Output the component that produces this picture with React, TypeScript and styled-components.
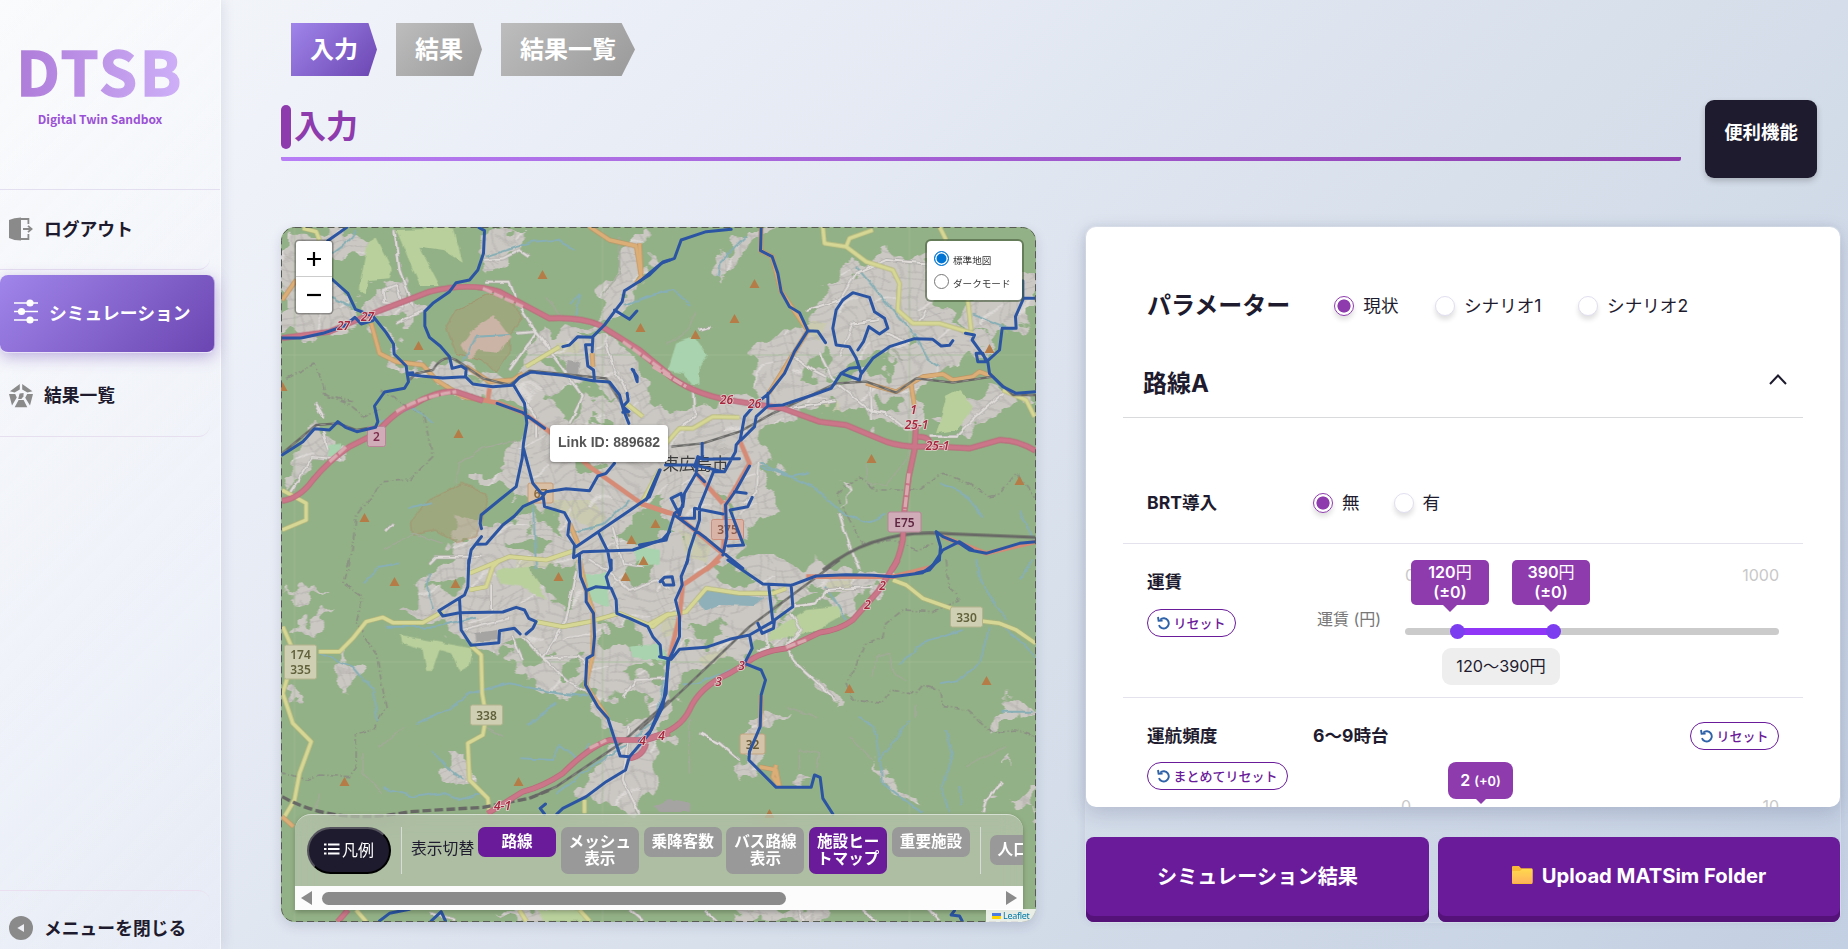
import React from "react";
import styled, { createGlobalStyle, css } from "styled-components";

const Global = createGlobalStyle`
  * { box-sizing: border-box; }
  html, body { margin: 0; height: 100%; overflow: hidden; }
  body {
    font-family: Inter, "Noto Sans CJK JP", sans-serif;
    color: #1e1b2e;
    background: linear-gradient(135deg, #f5f7fa 0%, #e9edf6 27%, #d4dde9 66%, #c3cfe2 100%);
    height: 949px;
  }
  button { font-family: inherit; }
`;

const Page = styled.div`
  display: flex;
  width: 1848px;
  height: 949px;
  overflow: hidden;
`;

/* ---------- sidebar ---------- */
const Sidebar = styled.aside`
  width: 221px;
  height: 949px;
  flex: none;
  display: flex;
  flex-direction: column;
  font-family: "Noto Sans CJK JP", sans-serif;
  background: linear-gradient(135deg, rgba(255, 255, 255, 0.5), rgba(240, 243, 252, 0.35));
  border-right: 1px solid rgba(255, 255, 255, 0.6);
  box-shadow: 2px 0 12px rgba(31, 38, 90, 0.1);
`;
const Brand = styled.div`
  height: 190px;
  display: flex;
  flex-direction: column;
  align-items: center;
  padding: 29px 20px 0 0;
  border-bottom: 1px solid #e3def0;
`;
const BrandName = styled.div`
  font-size: 61px;
  line-height: 81px;
  font-weight: 700;
  letter-spacing: 2.5px;
  -webkit-text-stroke: 1.4px transparent;
  background: linear-gradient(90deg, #ae7bd9, #ceb0f8);
  -webkit-background-clip: text;
  background-clip: text;
  color: transparent;
`;
const BrandSub = styled.div`
  font-size: 12px;
  line-height: 18px;
  font-weight: 700;
  color: #9b51d6;
`;
const NavItem = styled.a<{ $active?: boolean; $bottom?: boolean; $lift?: number }>`
  display: flex;
  align-items: center;
  gap: 11px;
  width: 210px;
  height: 80px;
  padding: 0 0 2px 9px;
  font-size: 17.8px;
  font-weight: 700;
  white-space: nowrap;
  color: #1e1b2e;
  border-bottom: 1px solid #e6dff0;
  border-radius: 0 0 12px 0;
  svg { flex: none; }
  span { padding-bottom: ${(p) => p.$lift || 0}px; }
  ${(p) =>
    p.$active &&
    css`
      width: 215px;
      height: 78px;
      margin: 5px 0 4px;
      padding: 0 0 4px 14px;
      border: 0;
      border-bottom: 1px solid #e8e2f6;
      border-right: 1px solid #b9a3e0;
      border-radius: 8px;
      color: #fff;
      background: linear-gradient(135deg, #a085ea, #6b46b2);
      box-shadow: 0 4px 15px rgba(107, 70, 178, 0.4);
    `}
  ${(p) =>
    p.$bottom &&
    css`
      margin-top: auto;
      height: 59px;
      padding: 15px 0 0 9px;
      border-bottom: 0;
      border-top: 1px solid #eadff0;
      border-radius: 0 12px 0 0;
    `}
`;

/* ---------- main ---------- */
const Main = styled.main`
  flex: 1;
  min-width: 0;
  padding: 23px 8px 0 60px;
`;
const Steps = styled.nav`
  display: flex;
  gap: 19px;
  padding-left: 10px;
`;
const Step = styled.div<{ $active?: boolean }>`
  height: 53px;
  padding: 0 19px;
  font: 700 24px/50px "Noto Sans CJK JP", sans-serif;
  color: #fff;
  clip-path: polygon(0 0, 90% 0, 100% 50%, 90% 100%, 0 100%);
  background: ${(p) =>
    p.$active ? "linear-gradient(135deg, #a085ea, #6b46b2)" : "linear-gradient(135deg, #bdbdbd, #9a9a9a)"};
`;
const Heading = styled.header`
  display: flex;
  gap: 24px;
  margin-top: 24px;
`;
const TitleBlock = styled.div`
  width: 1400px;
  height: 61px;
  padding-top: 5px;
  border-radius: 2px;
  background: linear-gradient(90deg, #b77ef5, #8e3bad) left bottom / 100% 4px no-repeat;
`;
const Title = styled.h1`
  margin: 0;
  display: flex;
  align-items: center;
  gap: 3px;
  height: 44px;
  font: 700 32px/44px "Noto Sans CJK JP", sans-serif;
  color: #8e3bad;
  span { padding-bottom: 6px; }
  &::before {
    content: "";
    width: 10px;
    height: 44px;
    border-radius: 5px;
    background: #8e3bad;
  }
`;
const ToolsButton = styled.button`
  width: 112px;
  height: 78px;
  border: 0;
  border-radius: 9px;
  padding: 0 0 16px;
  font: 700 18.4px/28px "Noto Sans CJK JP", sans-serif;
  color: #fff;
  background: #1e1b2e;
  box-shadow: 0 3px 6px rgba(0, 0, 0, 0.2);
`;
const Columns = styled.div`
  display: flex;
  gap: 50px;
  margin-top: 49px;
`;

/* ---------- map ---------- */
const MapCard = styled.section`
  position: relative;
  width: 755px;
  height: 695px;
  border-radius: 14px;
  overflow: hidden;
  box-shadow: 0 4px 12px rgba(31, 38, 90, 0.15);
  > svg { display: block; }
`;
const ZoomBox = styled.div`
  position: absolute;
  left: 15px;
  top: 14px;
  width: 36px;
  border-radius: 3px;
  background: #fff;
  box-shadow: 0 0 0 1.5px rgba(0, 0, 0, 0.3);
`;
const ZoomButton = styled.div`
  height: 36px;
  display: grid;
  place-items: center;
  &:first-child { border-bottom: 1px solid #ccc; }
`;
const LayerBox = styled.div`
  position: absolute;
  right: 14px;
  top: 14px;
  width: 95px;
  height: 59px;
  padding: 9px 7px;
  border-radius: 4px;
  background: #fff;
  box-shadow: 0 0 0 2px rgba(70, 90, 60, 0.6);
`;
const LayerOption = styled.label`
  display: flex;
  gap: 4px;
  height: 23px;
  align-items: flex-start;
  font: 9.6px/20px "Noto Sans CJK JP", sans-serif;
  color: #333;
`;
const NativeDot = styled.i<{ $on?: boolean }>`
  width: 15px;
  height: 15px;
  margin-top: 1px;
  border-radius: 50%;
  border: ${(p) => (p.$on ? "1.5px solid #0075d4" : "1px solid #767676")};
  background: ${(p) => (p.$on ? "#0075d4" : "#fff")};
  box-shadow: ${(p) => (p.$on ? "inset 0 0 0 1.5px #fff" : "none")};
`;
const LinkTip = styled.div`
  position: absolute;
  left: 269px;
  top: 198px;
  width: 118px;
  height: 37px;
  border-radius: 4px;
  background: #fff;
  text-align: center;
  font: 700 14px/35px "Liberation Sans", sans-serif;
  color: #555;
  box-shadow: 0 1px 3px rgba(0, 0, 0, 0.4);
`;
const MapTools = styled.div`
  position: absolute;
  left: 14px;
  top: 587px;
  width: 728px;
  height: 96px;
  border-radius: 16px 16px 0 0;
  border-top: 1px solid rgba(255, 255, 255, 0.5);
  background: rgba(212, 210, 204, 0.4);
  backdrop-filter: blur(10px);
  overflow: hidden;
  box-shadow: 0 2px 5px rgba(0, 0, 0, 0.25);
`;
const ToolRow = styled.div`
  display: flex;
  align-items: flex-start;
  height: 71px;
  padding: 12px 0 0 12px;
  font-family: "Noto Sans CJK JP", sans-serif;
`;
const LegendButton = styled.button`
  flex: none;
  width: 84px;
  height: 47px;
  padding: 0 0 3px;
  display: flex;
  align-items: center;
  justify-content: center;
  gap: 2px;
  border: 2px outset #1e1b2e;
  border-color: #55535e #000 #000 #55535e;
  border-radius: 24px;
  background: #1e1b2e;
  color: #fff;
  font-size: 16px;
  line-height: 20px;
`;
const Rule = styled.div<{ $gap: number }>`
  flex: none;
  width: 1px;
  height: 47px;
  margin: 0 9px 0 ${(p) => p.$gap}px;
  background: rgba(225, 225, 232, 0.8);
`;
const ToolLabel = styled.span`
  flex: none;
  width: 67px;
  font-size: 15.8px;
  line-height: 42px;
`;
const Toggle = styled.button<{ $on?: boolean; $low?: boolean }>`
  flex: none;
  width: 78px;
  margin: ${(p) => (p.$low ? "8px" : "0")} 4.8px 0 0;
  padding: 5px 5px 8px;
  border: 0;
  border-radius: 7px;
  font-size: 15.6px;
  line-height: 17px;
  font-weight: 700;
  white-space: pre;
  color: #fff;
  background: ${(p) => (p.$on ? "#6a1b9a" : "#999")};
`;
const ScrollTrack = styled.div`
  display: flex;
  align-items: center;
  height: 24px;
  padding: 0 6px;
  background: #fcfcfc;
`;
const Thumb = styled.div`
  width: 464px;
  height: 13px;
  margin: 0 auto 0 10px;
  border-radius: 7px;
  background: #8b8b8b;
`;
const Credit = styled.div`
  position: absolute;
  right: 0;
  bottom: 0;
  width: 50px;
  height: 13px;
  display: flex;
  align-items: center;
  gap: 2px;
  padding-left: 6px;
  background: rgba(255, 255, 255, 0.8);
  font: 9px/12px "Noto Sans", sans-serif;
  letter-spacing: -0.3px;
  color: #0078a8;
`;

/* ---------- parameter panel ---------- */
const Side = styled.section`
  width: 754px;
  height: 695px;
  border-radius: 10px;
  box-shadow: 0 0 0 1px rgba(255, 255, 255, 0.25), -2px 0 8px rgba(31, 38, 90, 0.08);
`;
const Panel = styled.div`
  height: 580px;
  padding: 0 37px;
  border-radius: 10px;
  background: #fff;
  overflow: hidden;
  box-shadow: 0 6px 20px rgba(31, 38, 90, 0.18);
`;
const ScenarioRow = styled.div`
  display: flex;
  align-items: center;
  height: 40px;
  margin-top: 59px;
  padding-left: 24px;
`;
const PanelTitle = styled.h2`
  margin: 0 44px 0 0;
  font-size: 24px;
  line-height: 38px;
  font-weight: 700;
`;
const Choice = styled.label<{ $gap?: number }>`
  display: flex;
  align-items: center;
  gap: 9px;
  margin-right: ${(p) => p.$gap || 36.5}px;
  font-size: 17.6px;
  line-height: 26px;
`;
const Dot = styled.i<{ $on?: boolean }>`
  width: 20px;
  height: 20px;
  border-radius: 50%;
  border: 1px solid ${(p) => (p.$on ? "#8e3bad" : "#e2def0")};
  background: ${(p) => (p.$on ? "radial-gradient(circle, #8e3bad 6.2px, #fff 6.9px)" : "#fff")};
  box-shadow: 0 4px 5px rgba(0, 0, 0, 0.12);
`;
const SectionHead = styled.div`
  display: flex;
  align-items: center;
  justify-content: space-between;
  height: 70px;
  margin-top: 22px;
  padding: 0 16px 3px 20px;
  border-bottom: 1px solid #d9dadc;
  font-size: 24px;
  font-weight: 700;
  svg { margin-bottom: 4px; }
`;
const Row = styled.div<{ $h: number; $top?: number; $pad?: number }>`
  display: flex;
  height: ${(p) => p.$h}px;
  margin-top: ${(p) => p.$top || 0}px;
  padding: ${(p) => p.$pad || 0}px 24px 0;
  border-bottom: 1px solid #e4e2ec;
`;
const Name = styled.div`
  width: 166px;
  flex: none;
  display: flex;
  flex-direction: column;
  align-items: flex-start;
  font-size: 17.6px;
  line-height: 28px;
  font-weight: 700;
`;
const Choices = styled.div`
  display: flex;
  height: 28px;
`;
const ResetButton = styled.button<{ $wide?: boolean; $mt?: number }>`
  width: ${(p) => (p.$wide ? 141 : 89)}px;
  height: 28px;
  margin-top: ${(p) => p.$mt || 0}px;
  display: flex;
  align-items: center;
  justify-content: center;
  gap: 3px;
  padding: 0 0 1px;
  border: 1px solid #6a1b9a;
  border-radius: 14px;
  background: #fff;
  color: #6a1b9a;
  font: 500 13px/18px "Noto Sans CJK JP", sans-serif;
  white-space: nowrap;
`;
const SliderLabel = styled.div`
  width: 92px;
  padding-top: 40px;
  text-indent: 4px;
  font-size: 16px;
  line-height: 22px;
  color: #777;
`;
const Slider = styled.div`
  position: relative;
  width: 374px;
`;
const Limits = styled.div<{ $mt: number; $indent?: number }>`
  display: flex;
  justify-content: space-between;
  margin-top: ${(p) => p.$mt}px;
  padding-left: ${(p) => p.$indent || 0}px;
  font-size: 16px;
  line-height: 20px;
  color: #c8c8c8;
`;
const Track = styled.div`
  display: flex;
  align-items: center;
  height: 7px;
  margin-top: 43px;
  border-radius: 4px;
  padding-left: 45px;
  background: #cbcbcb;
`;
const Selected = styled.div`
  display: flex;
  align-items: center;
  justify-content: space-between;
  width: 111px;
  height: 7px;
  background: linear-gradient(90deg, transparent 7px, #9036f6 7px, #9036f6 104px, transparent 104px);
`;
const Handle = styled.i`
  width: 15px;
  height: 15px;
  border-radius: 50%;
  background: #7c3df0;
`;
const Bubble = styled.div<{ $x: number; $small?: boolean }>`
  position: absolute;
  left: ${(p) => p.$x}px;
  top: ${(p) => (p.$small ? 40 : -8)}px;
  width: ${(p) => (p.$small ? 65 : 78)}px;
  height: ${(p) => (p.$small ? 37 : 45)}px;
  padding-top: ${(p) => (p.$small ? 8 : 2)}px;
  border-radius: ${(p) => (p.$small ? 8 : 5)}px;
  text-align: center;
  font-size: 16px;
  line-height: 20px;
  font-weight: 600;
  color: #fff;
  background: #8e3bad;
  small { font-size: 12.8px; }
  em { font-style: normal; font-weight: 400; }
  &::after {
    content: "";
    position: absolute;
    left: 50%;
    top: 100%;
    border: solid transparent;
    border-width: ${(p) => (p.$small ? "5px" : "7px")};
    border-top-color: #8e3bad;
    border-bottom: 0;
    transform: translateX(-50%);
  }
`;
const RangeValue = styled.div`
  width: 118px;
  height: 37px;
  margin: 13px 0 0 37px;
  border-radius: 9px;
  text-align: center;
  font-size: 16.2px;
  line-height: 36px;
  background: #eee;
`;
const FreqBody = styled.div`
  position: relative;
  flex: 1;
`;
const FreqHead = styled.div`
  display: flex;
  align-items: flex-start;
  justify-content: space-between;
  font-size: 17.6px;
  line-height: 28px;
  font-weight: 700;
`;
const Actions = styled.div`
  display: flex;
  gap: 9px;
  margin-top: 30px;
`;
const Action = styled.button<{ $w: number }>`
  width: ${(p) => p.$w}px;
  height: 85px;
  display: flex;
  align-items: center;
  justify-content: center;
  gap: 9px;
  padding: 0 0 9px;
  border: 0;
  border-radius: 8px;
  background: #6a1b9a;
  box-shadow: inset 0 -6px 0 #551279;
  color: #fff;
  font-size: 20.2px;
  font-weight: 700;
`;

/* ---------- icons ---------- */
const ResetIcon = () => (
  <svg width="13" height="14" viewBox="0 0 13 14" fill="none" stroke="#2f62a8" strokeWidth="1.9">
    <path d="M3.2 3.6A5.1 5.1 0 1 1 1.9 9.2" />
    <path d="M1 1L1.6 4.7L5.6 4.6" />
  </svg>
);
const Logout = () => (
  <svg width="24" height="24" viewBox="0 0 24 24" fill="#8a8a8a">
    <path d="M0 3 Q5 .5 12 .5V23.5Q5 23.5 0 21Z" />
    <path d="M12 2H19.4V7M12 22H19.4V17M14 12H22.5M19 8.8L22.6 12L19 15.2" fill="none" stroke="#8a8a8a" strokeWidth="1.8" />
  </svg>
);
const Sliders = () => (
  <svg width="24" height="26" viewBox="0 0 24 26" fill="#fff">
    <path d="M0 4H24M0 12.5H24M0 21H24" stroke="#fff" strokeWidth="1.7" />
    <circle cx="16" cy="4" r="3.6" />
    <circle cx="7.5" cy="12.5" r="3.6" />
    <circle cx="16" cy="21" r="3.6" />
  </svg>
);
const Pentagon = () => (
  <svg width="24" height="24" viewBox="0 0 24 24" fill="#8a8a8a">
    <path d="M10.8 0V5.6L5.6 8.6L1 7.2ZM13.2 0V5.6L18.4 8.6L23.4 7.2ZM0 10H6.2L7.8 13.4L3 21.5ZM24 10H18.2L16.2 13.8L21 21.5ZM9.6 16H14.6L18.3 23.2H5.7Z" />
    <path d="M10.6 9.6L14.6 9L14.4 12.4L12.4 15H9.2Z" />
  </svg>
);
const Collapse = () => (
  <svg width="24" height="24" viewBox="0 0 24 24">
    <circle cx="12" cy="12" r="12" fill="#8a8a8a" />
    <path d="M15 8V16L8.3 12Z" fill="#eef0f6" />
  </svg>
);
const Folder = () => (
  <svg width="21" height="18" viewBox="0 0 21 18">
    <defs>
      <linearGradient id="fold" x1="0" y1="0" x2="0" y2="1">
        <stop offset="0" stopColor="#ffd84d" />
        <stop offset="1" stopColor="#ffb35c" />
      </linearGradient>
    </defs>
    <path d="M0 1Q0 0 1 0H7L9 2.3H19.5Q20.5 2.3 20.5 3.5V17Q20.5 18 19.5 18H1Q0 18 0 17Z" fill="#f9b938" />
    <path d="M0 6Q0 5 1 5H8L10 3H19.5Q20.5 3 20.5 4V16Q20.5 17 19.5 17H1Q0 17 0 16Z" fill="url(#fold)" />
  </svg>
);

/* ---------- map drawing ---------- */
type Tile = { x: number; y: number; d: string };
const NW = { x: 270, y: 210 };
const NE = { x: 640, y: 210 };
const SW = { x: 270, y: 560 };
const SE = { x: 640, y: 560 };

const builtUp: Tile[] = [
  { ...NW, d: "M30 50L110 50L230 60L330 90L290 130L200 150L190 200L260 290L300 340L150 360L90 390L30 390Z" },
  { ...NW, d: "M300 250L400 200L440 290L380 340L300 320Z M330 350L420 470L560 450L700 500L740 480L800 350L900 400L960 380L1030 390L1120 430L1110 520L1200 640L1200 800L1130 1080L960 1080L890 960L790 880L700 760L780 640L700 570L600 560L520 520L400 500Z" },
  { ...NW, d: "M820 740L1200 700L1200 960L1000 960L900 920L800 850L640 830L600 790L700 780Z M560 930L700 900L880 960L1000 1080L520 1080Z" },
  { ...NW, d: "M130 660L180 680L220 730L130 770L60 840L40 800Z M640 60L760 60L730 140L650 200L640 120Z M1070 60L1130 60L1130 200L1040 310L900 420L840 400L980 330Z" },
  { ...NE, d: "M0 620L300 560L500 470L620 340L760 150L860 140L930 330L1060 420L880 480L830 560L850 660L700 640L600 580L420 620L360 700L420 850L400 920L320 960L310 1080L0 1080Z" },
  { ...NE, d: "M300 60L410 60L320 110L240 210L220 170Z M420 400L530 330L560 400L480 520L380 560L310 430Z M640 160L760 140L840 300L900 330L1000 380L900 440L700 420L580 480L500 330Z M1060 200L1188 170L1188 340L1080 350L1050 420L960 330Z M590 800L620 820L610 900Z M1040 540L1188 560L1100 590L980 660L900 640Z" },
  { ...SW, d: "M440 60L600 0L760 0L800 60L870 110L900 0L1200 0L1200 540L1100 760L990 730L900 690L940 620L1040 560L960 410L800 380L700 270L580 250L520 190L420 160Z" },
  { ...SW, d: "M530 580L600 570L610 650L560 690L520 650Z M40 120L120 100L170 80L110 130Z M40 380L100 410L60 450Z M60 200L230 150L130 220Z M190 280L260 300L240 400L220 400Z M700 1045L900 1045L880 1085L730 1085Z" },
  { ...SE, d: "M0 0L330 0L700 30L760 60L640 160L600 180L540 100L460 130L400 260L300 280L150 330L80 440L0 640Z M330 470L450 455L370 500L340 660L310 650L280 600L330 590Z M470 640L520 640L500 690Z M1030 480L1080 430L1188 440L1130 480L1040 500Z M700 590L820 720L850 762L740 680Z M520 350L600 420L590 435L540 390Z M1110 590L1140 620L1110 620Z M250 1045L560 1045L520 1085L300 1085Z M1090 700L1180 680L1188 760L1110 740Z" },
];
/* Wooded pockets left standing inside the built-up area */
const woods: Tile[] = [
  { ...NW, d: "M560 490L640 500L680 515L620 515ZM810 440L860 420L900 450L880 480L800 470ZM840 560L960 530L1010 550L940 580L900 640L850 620ZM1000 600L1060 640L1040 650L980 640ZM930 770L980 740L1010 770L970 790ZM650 920L740 860L800 890L700 940ZM1100 900L1200 890L1200 980L1060 990L1090 940ZM700 990L800 960L840 1000L770 1020Z" },
  { ...NE, d: "M0 900L60 880L90 920L60 980L0 990ZM560 480L700 430L790 450L720 500L620 510ZM700 560L800 560L810 600L730 600ZM780 370L850 360L830 400L780 400ZM540 420L580 430L560 480L480 510ZM250 850L280 880L260 960Z" },
  { ...SW, d: "M820 20L920 0L920 100L870 140L820 90ZM700 260L760 230L830 290L760 300ZM1060 20L1130 10L1150 60L1090 80ZM990 180L1110 200L1130 250L1020 260L990 230ZM880 290L940 310L930 360L880 340ZM1060 320L1170 300L1160 340L1080 350ZM1000 420L1150 400L1130 460L1060 500ZM470 90L560 60L560 100Z" },
  { ...SE, d: "M200 20L300 20L350 70L260 80ZM130 200L240 180L280 220L160 250ZM480 90L560 60L600 90L540 100ZM410 90L440 90L440 130L410 150Z" },
];
const farmland: Tile[] = [
  { ...NW, d: "M380 60L550 55L580 155L520 120L450 110L510 225L450 225L410 130Z M295 95L320 80L370 180L360 205L300 210L290 250L268 240Z" },
  { ...NE, d: "M920 560L960 540L1000 590L990 610L950 660L890 670L910 600Z" },
  { ...SW, d: "M390 225L470 240L610 265L600 320L570 335L545 280L510 270L490 330L470 330L460 270L395 250Z M680 30L780 20L830 120L760 80L690 70Z M800 1050L930 1050L960 1083L820 1083Z" },
  { ...SE, d: "M400 210L500 150L600 140L600 170L530 210L380 250Z" },
];
const paddies: Tile[] = [
  { ...NW, d: "M830 870L960 870L1010 920L980 960L900 920ZM740 1040L860 1040L850 1075L740 1075ZM860 400L930 395L930 430L860 430Z" },
  { ...NE, d: "M530 580L600 570L600 610L540 610ZM480 330L560 340L540 390L490 360ZM120 960L220 990L200 1060L140 1040Z" },
  { ...SE, d: "M60 180L110 170L110 220L70 230ZM180 290L260 260L250 300L190 320ZM560 70L640 60L640 90L570 95Z" },
];
const scrub: Tile[] = [
  { ...NW, d: "M530 350L560 300L650 255L710 260L760 320L720 380L720 430L680 490L640 450L560 430Z" },
  { ...NW, d: "M425 930L480 870L580 820L655 855L640 920L620 980L560 995L500 960L430 975Z" },
];
const meadow: Tile[] = [
  { ...NE, d: "M110 400L165 380L205 435L180 470L180 520L155 525L130 490L85 480Z M0 1010L60 1020L60 1060L0 1070Z" },
  { ...NW, d: "M1090 1015L1170 1020L1170 1050L1100 1050Z M180 705L215 700L210 740L175 740Z" },
  { ...SW, d: "M1080 260L1170 250L1200 300L1090 295Z M940 40L1010 40L1020 140L960 120Z" },
];
const water: Tile[] = [
  { ...NW, d: "M187 130L240 90L260 60M187 260L260 300M330 640L430 590L490 640M580 460L620 380L720 375M650 140L790 95L860 90L915 118M905 280L930 250L920 320M1060 290L1110 270L1200 240M790 870L800 1080M900 970L1000 945L1080 870M420 895L490 880" },
  { ...NE, d: "M320 80L240 160L235 200M0 265L100 240L155 285M650 170L760 300L830 380L870 450L900 470M365 770L450 800L510 790M365 760L520 830L610 910L690 940L740 910M905 818L960 840L1030 920M1000 310L1070 340L1120 360M1140 900L1188 1000" },
  { ...SW, d: "M150 280L250 320L310 390L325 485M440 490L540 450L600 400L720 370L860 400L960 410M345 685L430 710L520 700L570 720L650 695M775 495L860 430M750 595L850 600L870 555L930 600L960 550M280 70L330 20L390 10M480 40L470 80L490 150M490 575L540 630L580 660M350 200L500 200L620 170M1190 340L1160 480L1060 560L940 640L860 700" },
  { ...SE, d: "M655 470L705 500L720 600L810 480M725 600L730 670L850 760M920 510L940 580L905 680L930 760M1010 0L1020 60L1100 180M780 315L850 250L970 210M900 370L960 360L1020 310L1050 200M1085 455L1180 455M560 80L620 180M1090 200L1150 250L1188 290M130 370L170 370L300 320M960 680L965 740M1140 60L1180 0" },
];
const yellowRoads: Tile[] = [
  { ...NW, d: "M100 55L140 65L150 90M770 470L870 410M38 840L110 880L110 930L38 960M1070 580L1120 620M600 1090L720 1040L830 1050L920 1020" },
  { ...NE, d: "M550 50L555 100L620 110L680 155L760 180L780 220L775 300L820 340L900 340L1000 370M620 110L630 85L700 60M900 50L920 90M985 270L995 360M80 700L120 655L160 655L220 620L300 622M1090 540L1160 570L1185 620M60 780L0 890" },
  { ...SW, d: "M148 275L210 275L250 235L290 185L340 172L370 188L460 188L520 155M600 90L650 80L670 20L690 0M800 185L880 200L960 185L1050 160L1150 200L1200 160M605 258L635 285L638 400L650 470L640 525L595 550L600 660L655 715L660 760M40 200L75 280L40 400L70 490L125 545L90 640L75 720L45 770M260 1050L290 1085M750 1050L770 1083M930 1050L960 1083M945 720L945 760" },
  { ...SE, d: "M25 195L80 165L140 155L200 85L300 100L400 100L440 85M760 60L800 75L850 115L920 140L980 160L1000 180L1080 190L1130 210L1188 250" },
];
const orangeRoads: Tile[] = [
  { ...NW, d: "M960 50L1020 90L1100 108L1115 200L1100 220M38 270L80 210M305 340L330 430L380 455L460 465L500 510L580 560L640 570M590 470L660 515L730 510L760 490M968 430L970 470M900 940L925 1000" },
  { ...NE, d: "M0 100L5 190M680 520L770 545L850 500L910 492L940 510L1000 500L1020 485L1060 500M815 520L825 590M365 52L363 122L398 140L425 245L505 362L388 550" },
  { ...SW, d: "M930 0L950 92L972 160L970 285L948 375L1015 475M38 770L72 800" },
  { ...SE, d: "M360 620L410 630L420 680L400 650L410 615M365 405L362 500" },
];
const salmonRoads: Tile[] = [
  { ...NW, d: "M640 570L690 580L760 608L840 665L960 770L1115 880L1200 910M655 570L660 535" },
  { ...NE, d: "M0 880L110 915L250 1030L200 1080M300 690L330 760L258 885L250 1035M170 790L250 880M1188 995L1040 1030L910 980" },
  { ...SE, d: "M240 0L130 75L120 170L88 300M500 50L760 50L880 20" },
];
const motorways: Tile[] = [
  { ...NW, d: "M38 872Q90 865 130 810Q180 750 240 710L320 670Q380 600 430 585Q500 540 560 545L640 572M38 384L180 365L250 335L330 302L480 245Q600 215 690 245L840 325Q930 320 990 345L1110 420L1200 495" },
  { ...NE, d: "M0 425L100 505Q180 560 300 575L430 595L540 635L620 645L740 695Q800 715 870 708L990 715L1080 690Q1130 688 1188 722M830 640L825 720L808 800L795 900L790 990Q775 1060 755 1080M835 680Q870 680 870 700" },
  { ...SW, d: "M1200 520L1130 540L1020 540Q960 560 880 640Q820 680 760 695L655 760M235 1050L205 1085M1130 550Q1120 590 1080 595" },
  { ...SE, d: "M775 0L715 95L640 180Q600 210 540 218L440 265Q360 275 320 310L270 340Q180 380 150 450Q120 510 40 530L0 550" },
];
const tunnels: Tile[] = [
  { ...NW, d: "M380 605Q450 560 560 545M180 755L230 710M640 235L760 290M1060 395L1200 495" },
  { ...NE, d: "M808 790L796 900M40 470L140 530" },
  { ...SE, d: "M440 262L500 240" },
  { ...SW, d: "M960 565L1010 540" },
];
const rails: Tile[] = [
  { ...NW, d: "M38 730L140 645L205 640L262 660L318 650M420 510L440 490L490 480Q520 430 560 450L640 505L720 525L780 482L1010 505L1080 620" },
  { ...NE, d: "M95 710L190 700L300 665L400 610L590 520L680 515L770 548L830 505L940 518L1060 500L1120 555L1188 555" },
  { ...SW, d: "M780 715L860 680L1060 545L1200 420" },
  { ...SE, d: "M0 510L130 390L330 200L600 0" },
];
const shinkansen: Tile[] = [
  { ...NE, d: "M1188 982L900 970Q700 960 550 1080" },
];
const shinkansenTunnel: Tile[] = [
  { ...SW, d: "M38 710Q200 800 420 755L640 742L780 715L840 690" },
];
const borders: Tile[] = [
  { ...NW, d: "M50 505L135 462L175 560L230 575L285 620L330 600M330 540L400 580L460 610L490 740L420 810L340 815L260 920L240 1080M160 550L250 575" },
  { ...NE, d: "M625 920L590 850L660 800L710 840L840 840L910 790L990 820L1050 860L1080 855L1130 790L1188 860M625 920L670 1000L760 990L830 1020L880 1000" },
  { ...SW, d: "M240 0L220 70L280 110L260 190L320 280L350 440L310 510L260 525L260 620L240 650L150 645L110 660L38 635" },
  { ...SE, d: "M920 0L930 80L960 120L880 155L790 150L740 190L730 230L680 250L650 320L620 370L640 420L730 430L750 390L830 400L850 375L900 390L910 440L980 450L1060 520L1130 510L1188 530" },
];
const lanes: Tile[] = [
  { ...NW, d: "M375 60L390 180L430 290M340 240L380 225L400 290L345 280ZM650 215L720 215L740 270L800 365L940 560L900 640M640 150L700 145L750 120L780 140M740 370L800 365L850 430M800 370L720 480M730 530L800 620L800 680M1010 400L1030 470L1080 560M60 850L130 740L220 750M140 580L165 625M160 660L175 720M380 340L460 300M370 940L350 960M1030 950L1060 1060L1120 1070M480 1060L500 1040L640 1040" },
  { ...NE, d: "M500 300L600 270L650 190L740 150L860 160M540 430L580 510L690 600L740 610L790 650M460 440L520 480L560 500M600 440L640 340L720 330M690 520L695 630M340 640L420 600L590 570M860 300L835 340M870 680L950 680L1010 620L1090 550M360 760L350 850L310 880M600 910L620 980L660 1080M160 530L165 620L110 660M740 370L810 400M210 350L180 360" },
  { ...SW, d: "M580 212L720 175M760 230L820 295L930 290L960 320M820 295L900 370L960 400M920 30L890 180L820 290M665 70L665 150M730 230L760 300M1060 410L1100 360L1190 355M1080 500L1060 660L1110 760M960 0L1010 30L1080 90L1160 60L1200 90M480 1060L560 1080M1080 1050L1120 1085" },
  { ...SE, d: "M440 250L460 300L500 340L590 420M455 160L485 210L440 260M460 140L530 130L560 90L700 80M350 270L385 260L380 220M1030 760L1040 720L1090 665M180 520L240 550L300 600M200 1055L230 1083M480 1050L490 1083M870 1050L900 1083M670 1050L710 1083" },
];
const tracks: Tile[] = [
  { ...NW, d: "M560 820L570 760L640 715L740 690M340 1020L430 970L520 1000M830 260L880 330L960 340M1050 80L1050 190L1000 250" },
  { ...NE, d: "M680 760L680 820L740 825L800 750L810 700M170 310L130 380L80 400M760 420L790 450" },
  { ...SW, d: "M280 580L280 640L340 700M150 700L140 750M400 500L330 560M640 500L700 530" },
  { ...SE, d: "M700 350L710 290L750 280L760 340L800 360M630 530L700 600M480 630L480 570L540 580L530 640M980 620L1100 560M830 430L830 470M150 480L150 640M440 440L530 470" },
];
const routes: Tile[] = [
  { ...NW, d: "M232 52L175 92M187 207L235 250L258 298L310 318L350 368L372 402L374 432L410 468L413 492L455 498L520 504L588 500L610 522L670 530L728 526L750 502L785 486L880 496L970 512L1020 516L1050 555L1062 600L1078 640M38 384L95 384L160 370L225 348L256 322L275 342L310 332M430 488L413 490L417 515L405 535L345 546L315 588L325 635L318 652L262 665L228 652L205 635L180 660L135 656L100 695L38 735M628 52L645 62L642 130L625 180L600 210L560 218L540 245L490 280L466 304L466 348L480 382L512 408L540 440L548 475L575 468L590 478L588 500M1200 150L1180 156L1140 195L1065 242L1058 275L1035 305L1005 345L968 382L925 380L900 405L880 410M1035 300L1080 328L1102 303M970 382L968 425M968 404L948 404L955 468L972 480L975 512M732 525L765 580L772 640L762 700L758 745L740 830L690 870L635 915L632 940L636 956M762 715L790 820L815 850M683 580L760 608L825 655M1035 760L1010 790L985 798L960 842L890 836L830 845L815 865L760 890L735 918L700 945L650 1002L620 1003M636 980L605 1020L598 1060M820 850L825 890L885 908L900 935L895 975L915 1005L912 1043L940 1025L1090 1020L1180 988L1200 965M1172 780L1140 860L1075 905L920 1010M988 970L1015 1025L1025 1080M930 1035L930 1055M1088 478L1103 500L1103 515L1092 480M1073 550L1076 572L1060 590L1078 605L1060 607" },
  { ...NE, d: "M0 215L65 160L105 145L125 90L200 65L275 58M365 52L363 122L398 140L415 190L425 245L450 290L480 308L505 362L465 425L435 490L388 550L350 580L315 620L302 690L290 705L288 725L255 785L222 785L200 840L180 890L180 930L150 1020L142 1060M505 362L535 364L558 398M655 420L672 395L688 350L720 372L745 355L735 325L705 305L690 262L640 248L610 270L590 300L580 355L590 405L630 410L650 445L665 490L660 510L605 490L575 535L520 555L430 585L385 588L385 550M605 490L630 475L660 472M665 492L700 445L750 410L825 386L880 388L905 408L930 406L940 392M978 370L1005 375L998 390L1045 455L1050 490L1090 530L1130 550L1188 545M1045 452L1080 420L1088 355L1130 355L1128 320L1150 270L1150 212M1150 265L1188 265M1010 430L1030 430L1040 455L1015 455ZM385 588L350 620L345 650L305 690M188 700L188 740M165 770L175 740L190 748L300 746M78 765L165 765L250 785M175 750L170 790L135 850L130 890L105 910L80 990L0 1005M170 790L195 815M95 865L125 850L130 880L120 915L95 865M105 915L200 985L260 1035L310 1075M60 780L20 870M330 768L290 840L258 885L262 980L250 1035M285 845L320 850M338 862L325 890L272 900L312 1005L265 1008M125 925L165 925L165 895L250 912M1188 995L1140 1000L1040 1030L990 1020L960 1000L910 980L890 965L903 1010L900 1045L870 1080M1000 1020L960 995L910 1020L870 1080L830 1090" },
  { ...SW, d: "M598 0L595 80L585 105L508 152L520 168L570 158L700 156L740 142L765 150L778 175L800 185L790 205L770 222M570 115L575 210L605 256L688 248L690 212L735 205L752 222M930 0L933 50L950 92L950 125L972 160L975 230L970 285L952 295L948 375L985 440L1015 475L1052 588L1080 590M955 90L980 80L1025 85L1040 120L1042 160L1080 175L1135 200L1150 230L1172 255L1175 290L1200 298M1025 0L1025 25L1010 50L1020 85M1195 300L1190 400L1165 460L1140 520L1080 590L1068 630L1010 665L950 710L880 745L862 762M828 732L812 745L825 762M330 1083L360 1060L420 1048M485 1083L515 1055L528 1083" },
  { ...SE, d: "M145 0L125 50L128 75L108 120L120 170L120 230L100 275L88 300L80 370L70 440L35 510L0 545M60 290L95 298L120 268L200 262L270 238L330 225L400 185L388 80M265 0L370 72L455 76L530 48L620 44L700 46L760 50L850 38L900 0M455 76L460 140L405 180L402 205L368 220L355 190M330 225L338 265L315 310L365 330L378 360L365 405L362 500L330 575L328 600L410 682L515 682L525 645L542 652L550 715L580 762M62 65L75 52L98 50L103 75L75 75L68 62M945 1052L935 1065L960 1068L968 1083" },
];
const peaks: [number, number][] = [
  [543, 275], [419, 346], [641, 328], [459, 434], [365, 518], [656, 524], [632, 540], [755, 284], [735, 319], [696, 335],
  [990, 349], [872, 459], [1020, 481], [395, 582], [456, 584], [559, 577], [626, 577], [644, 561], [345, 782], [519, 782],
  [850, 689], [987, 681], [770, 814], [283, 387],
];
const shields: { x: number; y: number; w: number; lines: string[]; bg: string; line: string; ink: string }[] = [
  { x: 377, y: 436.5, w: 18, lines: ["2"], bg: "#cfacb8", line: "#b98497", ink: "#7d2c4b" },
  { x: 541, y: 493, w: 25, lines: ["67"], bg: "#d9bfa4", line: "#c69c78", ink: "#8a6a3c" },
  { x: 728, y: 529.5, w: 32, lines: ["375"], bg: "#d9b3a5", line: "#cc8f7c", ink: "#8a5a4c" },
  { x: 905, y: 522, w: 33, lines: ["E75"], bg: "#cfacb8", line: "#b98497", ink: "#5f2540" },
  { x: 301, y: 662, w: 32, lines: ["174", "335"], bg: "#cfcfb4", line: "#b4b48e", ink: "#62623c" },
  { x: 487, y: 715, w: 32, lines: ["338"], bg: "#cfcfb4", line: "#b4b48e", ink: "#62623c" },
  { x: 967, y: 617, w: 32, lines: ["330"], bg: "#cfcfb4", line: "#b4b48e", ink: "#62623c" },
  { x: 753, y: 744, w: 25, lines: ["32"], bg: "#d4c3a8", line: "#bfa280", ink: "#6a5a38" },
];
const exits: [number, number, string][] = [
  [344, 330, "27"], [368, 321, "27"], [727, 404, "26"], [755, 408, "26"], [914, 414, "1"], [917, 429, "25-1"],
  [938, 450, "25-1"], [883, 590, "2"], [868, 609, "2"], [742, 670, "3"], [719, 686, "3"], [662, 740, "4"], [643, 745, "4"], [503, 810, "4-1"],
];

type LayerProps = { tiles: Tile[] } & React.SVGProps<SVGPathElement>;
const Layer = ({ tiles, ...rest }: LayerProps) => (
  <>
    {tiles.map((t, i) => (
      <path key={i} fill="none" strokeLinejoin="round" {...rest} d={t.d} transform={`translate(${t.x} ${t.y}) scale(.33333)`} />
    ))}
  </>
);

const MapDrawing = () => (
  <svg width="755" height="695" viewBox="281.5 227 755 695">
    <defs>
      <filter id="rough" x="-5%" y="-5%" width="110%" height="110%">
        <feTurbulence type="fractalNoise" baseFrequency=".04" numOctaves="3" seed="8" />
        <feDisplacementMap in="SourceGraphic" scale="42" xChannelSelector="R" yChannelSelector="G" />
      </filter>
      <filter id="wobble" x="-5%" y="-5%" width="110%" height="110%">
        <feTurbulence type="fractalNoise" baseFrequency=".09" numOctaves="2" seed="3" />
        <feDisplacementMap in="SourceGraphic" scale="5" xChannelSelector="R" yChannelSelector="G" />
      </filter>
      <filter id="bend" x="-5%" y="-5%" width="110%" height="110%">
        <feTurbulence type="fractalNoise" baseFrequency=".018" numOctaves="2" seed="5" />
        <feDisplacementMap in="SourceGraphic" scale="48" xChannelSelector="R" yChannelSelector="G" />
      </filter>
      <pattern id="streets" width="47" height="41" patternUnits="userSpaceOnUse" patternTransform="rotate(-14)">
        <path d="M0 6H47M0 15H27M9 24H47M0 33H30M6 0V33M16 6V24M27 0V41M38 15V41M38 0V6M30 33L47 38" stroke="#b2afac" strokeWidth=".9" fill="none" />
        <path d="M0 15H6M27 24L47 15" stroke="#dedbd9" strokeWidth="1.6" fill="none" />
      </pattern>
      <mask id="town" maskUnits="userSpaceOnUse" x="270" y="210" width="780" height="720">
        <g filter="url(#rough)">
          <Layer tiles={builtUp} fill="#fff" />
          <Layer tiles={woods} fill="#000" />
        </g>
      </mask>
    </defs>
    <rect x="280" y="226" width="760" height="700" fill="#93b186" />
    <g mask="url(#town)">
      <rect x="270" y="210" width="780" height="720" fill="#cbc8c4" />
      <g filter="url(#wobble)">
        <Layer tiles={paddies} fill="#c9cab0" />
      </g>
      <g filter="url(#bend)">
        <rect x="240" y="180" width="840" height="790" fill="url(#streets)" />
      </g>
    </g>
    <path d="M295 226V922M603 226V922M910 226V922M280 355H1037M280 662H1037" stroke="#a1bb95" strokeWidth=".7" />
    <g filter="url(#wobble)">
      <Layer tiles={farmland} fill="#b9d09c" />
      <Layer tiles={scrub} fill="#a89f77" fillOpacity=".5" stroke="#b0805f" strokeOpacity=".6" strokeWidth="3" />
      <path d="M472 330L495 315L512 338L500 352L480 350L470 360L462 345Z" fill="#cbb3a5" />
      <Layer tiles={meadow} fill="#a8d3ae" />
      <path d="M697 601L707 588L730 593L765 598L755 606L720 605L705 611Z" fill="#8fb0b8" />
      <path d="M655 806L670 799L692 803L691 812L660 812ZM475 633L498 630L499 640L476 642ZM568 360L580 362L578 378L566 372Z" fill="#a5a4a3" />
      <Layer tiles={tracks} stroke="#a3aa9a" strokeWidth="4" />
      <Layer tiles={borders} stroke="#8b9184" strokeWidth="5" strokeDasharray="20 8 4 8" />
      <Layer tiles={water} stroke="#87afb5" strokeWidth="6" />
      <Layer tiles={lanes} stroke="#a9a7a4" strokeWidth="10" />
      <Layer tiles={lanes} stroke="#dedbd9" strokeWidth="6.5" />
    </g>
    <Layer tiles={yellowRoads} stroke="#b3b57b" strokeWidth="14" />
    <Layer tiles={yellowRoads} stroke="#d6d794" strokeWidth="10.5" />
    <Layer tiles={orangeRoads} stroke="#bd9262" strokeWidth="14" />
    <Layer tiles={orangeRoads} stroke="#dbae78" strokeWidth="10.5" />
    <Layer tiles={rails} stroke="#686866" strokeWidth="7" />
    <Layer tiles={rails} stroke="#a9a8a4" strokeWidth="2" strokeDasharray="18 18" />
    <Layer tiles={shinkansen} stroke="#686866" strokeWidth="9" />
    <Layer tiles={shinkansenTunnel} stroke="#686866" strokeWidth="10" strokeDasharray="26 10" />
    <Layer tiles={salmonRoads} stroke="#d58b76" strokeWidth="14" />
    <Layer tiles={motorways} stroke="#b86579" strokeWidth="17" />
    <Layer tiles={motorways} stroke="#cb7789" strokeWidth="13" />
    <Layer tiles={tunnels} stroke="#d9a9b0" strokeWidth="10" strokeDasharray="30 6" />
    {peaks.map(([x, y], i) => (
      <path key={i} d={`M${x} ${y - 5}L${x + 5} ${y + 4}H${x - 5}Z`} fill="#b57c48" />
    ))}
    {shields.map((s) => {
      const h = s.lines.length === 2 ? 34 : 20;
      return (
        <g key={s.lines[0]}>
          <rect x={s.x - s.w / 2} y={s.y - h / 2} width={s.w} height={h} rx="2" fill={s.bg} stroke={s.line} />
          {s.lines.map((l, i) => (
            <text key={l} x={s.x} y={s.y + 4.5 + (i - (s.lines.length - 1) / 2) * 15} textAnchor="middle" fontFamily="Noto Sans" fontSize="12" fontWeight="600" fill={s.ink}>
              {l}
            </text>
          ))}
        </g>
      );
    })}
    <text x="663" y="470" fontFamily="Noto Sans CJK JP" fontSize="16.5" fill="#3c3c3c">
      東広島市
    </text>
    <Layer tiles={routes} stroke="#2b55a3" strokeWidth="9" strokeLinecap="round" />
    {exits.map(([x, y, t], i) => (
      <text key={i} x={x} y={y} textAnchor="middle" fontFamily="Noto Sans" fontSize="12" fontStyle="italic" fontWeight="600" fill="#a8273f" stroke="#dfd3cf" strokeWidth="1.6" paintOrder="stroke">
        {t}
      </text>
    ))}
    <rect x="282" y="227.5" width="754" height="694" rx="13" fill="none" stroke="#565a52" strokeWidth="1" strokeDasharray="7 4" />
  </svg>
);

const toggles = [
  { text: "路線", on: true },
  { text: "メッシュ\n表示" },
  { text: "乗降客数" },
  { text: "バス路線\n表示" },
  { text: "施設ヒー\nトマップ", on: true },
  { text: "重要施設" },
];

export default function App() {
  return (
    <>
      <Global />
      <Page>
        <Sidebar>
          <Brand>
            <BrandName>DTSB</BrandName>
            <BrandSub>Digital Twin Sandbox</BrandSub>
          </Brand>
          <NavItem $lift={2}><Logout /><span>ログアウト</span></NavItem>
          <NavItem $active><Sliders /><span>シミュレーション</span></NavItem>
          <NavItem $lift={4}><Pentagon /><span>結果一覧</span></NavItem>
          <NavItem $bottom $lift={2}><Collapse /><span>メニューを閉じる</span></NavItem>
        </Sidebar>
        <Main>
          <Steps>
            <Step $active>入力</Step>
            <Step>結果</Step>
            <Step>結果一覧</Step>
          </Steps>
          <Heading>
            <TitleBlock>
              <Title><span>入力</span></Title>
            </TitleBlock>
            <ToolsButton>便利機能</ToolsButton>
          </Heading>
          <Columns>
            <MapCard>
              <MapDrawing />
              <ZoomBox>
                <ZoomButton>
                  <svg width="16" height="16"><path d="M8 1V15M1 8H15" stroke="#000" strokeWidth="2.2" /></svg>
                </ZoomButton>
                <ZoomButton>
                  <svg width="16" height="16"><path d="M1 8H15" stroke="#000" strokeWidth="2.2" /></svg>
                </ZoomButton>
              </ZoomBox>
              <LayerBox>
                <LayerOption><NativeDot $on />標準地図</LayerOption>
                <LayerOption><NativeDot />ダークモード</LayerOption>
              </LayerBox>
              <LinkTip>Link ID: 889682</LinkTip>
              <MapTools>
                <ToolRow>
                  <LegendButton>
                    <svg width="16" height="14" viewBox="0 0 16 14" stroke="#fff" strokeWidth="1.8">
                      <path d="M0 2.5H2.5M4 2.5H15.5M0 7H2.5M4 7H15.5M0 11.5H2.5M4 11.5H15.5" />
                    </svg>
                    凡例
                  </LegendButton>
                  <Rule $gap={10} />
                  <ToolLabel>表示切替</ToolLabel>
                  {toggles.map((t) => (
                    <Toggle key={t.text} $on={t.on}>{t.text}</Toggle>
                  ))}
                  <Rule $gap={5} />
                  <Toggle $low>人口分布</Toggle>
                </ToolRow>
                <ScrollTrack>
                  <svg width="11" height="14"><path d="M11 0V14L0 7Z" fill="#8b8b8b" /></svg>
                  <Thumb />
                  <svg width="11" height="14"><path d="M0 0V14L11 7Z" fill="#8b8b8b" /></svg>
                </ScrollTrack>
              </MapTools>
              <Credit>
                <svg width="9" height="6"><path d="M0 0H9V3H0Z" fill="#4c7be1" /><path d="M0 3H9V6H0Z" fill="#ffd500" /></svg>
                Leaflet
              </Credit>
            </MapCard>
            <Side>
              <Panel>
                <ScenarioRow>
                  <PanelTitle>パラメーター</PanelTitle>
                  <Choice><Dot $on />現状</Choice>
                  <Choice><Dot />シナリオ1</Choice>
                  <Choice><Dot />シナリオ2</Choice>
                </ScenarioRow>
                <SectionHead>
                  路線A
                  <svg width="18" height="11" viewBox="0 0 18 11">
                    <path d="M1 10L9 1.5L17 10" fill="none" stroke="#1e1b2e" strokeWidth="2" />
                  </svg>
                </SectionHead>
                <Row $h={80} $top={46} $pad={25}>
                  <Name>BRT導入</Name>
                  <Choices>
                    <Choice $gap={34}><Dot $on />無</Choice>
                    <Choice><Dot />有</Choice>
                  </Choices>
                </Row>
                <Row $h={154} $pad={24}>
                  <Name>
                    運賃
                    <ResetButton $mt={13}><ResetIcon />リセット</ResetButton>
                  </Name>
                  <SliderLabel>運賃 (円)</SliderLabel>
                  <Slider>
                    <Limits $mt={-3}><span>0</span><span>1000</span></Limits>
                    <Track>
                      <Selected><Handle /><Handle /></Selected>
                    </Track>
                    <RangeValue>120〜390円</RangeValue>
                    <Bubble $x={6}>120<em>円</em><br />(±0)</Bubble>
                    <Bubble $x={107}>390<em>円</em><br />(±0)</Bubble>
                  </Slider>
                </Row>
                <Row $h={154} $pad={24}>
                  <Name>
                    運航頻度
                    <ResetButton $wide $mt={12}><ResetIcon />まとめてリセット</ResetButton>
                  </Name>
                  <FreqBody>
                    <FreqHead>
                      6〜9時台
                      <ResetButton><ResetIcon />リセット</ResetButton>
                    </FreqHead>
                    <Limits $mt={46} $indent={88}><span>0</span><span>10</span></Limits>
                    <Bubble $small $x={135}>2 <small>(+0)</small></Bubble>
                  </FreqBody>
                </Row>
              </Panel>
              <Actions>
                <Action $w={343}>シミュレーション結果</Action>
                <Action $w={402}><Folder />Upload MATSim Folder</Action>
              </Actions>
            </Side>
          </Columns>
        </Main>
      </Page>
    </>
  );
}
